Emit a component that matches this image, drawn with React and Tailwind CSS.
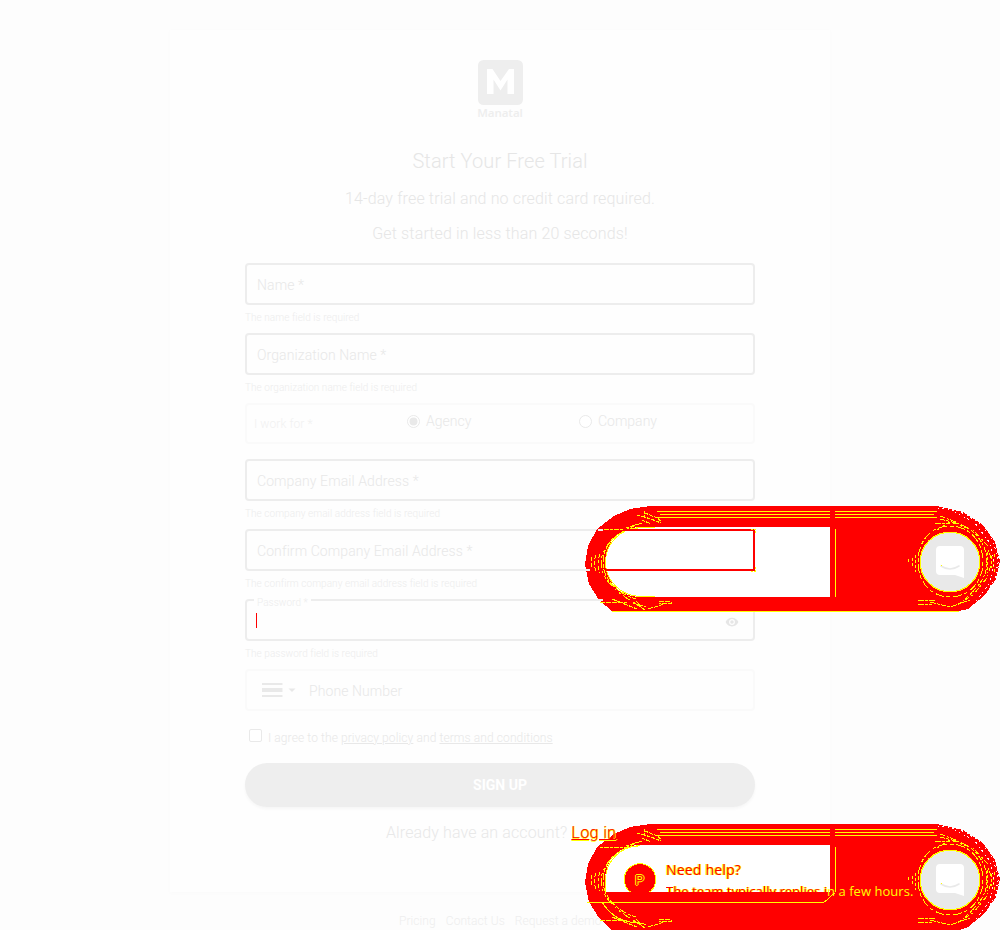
import React from "react";

function Field({ label, note }) {
  return (
    <div className="h-[70px]">
      <div className="flex h-[42px] items-center rounded-[4px] border-2 border-[#ededed] pl-[10px] pt-px text-[14px] leading-[20px] tracking-[0.09px] text-[#e8e8e8]">
        {label}
      </div>
      <div className="mt-[7px] text-[10px] leading-[12px] tracking-[0.06px] text-[#ededed]">{note}</div>
    </div>
  );
}

function Logo() {
  return (
    <div className="flex h-[60px] w-[50px] flex-col items-center">
      <svg width="45" height="45" viewBox="0 0 45 45" className="block shrink-0">
        <rect width="45" height="45" rx="5.5" fill="#eeeeee" />
        <path d="M9 34V9h5.500L22.500 21 31 9H36v25h-6.500V19.500L22.500 30.500 15.500 19.500V34Z" fill="#fff" />
      </svg>
      <div className="font-['Noto_Sans'] text-[11.5px] leading-[15px] font-semibold tracking-[-0.1px] text-[#eeeeee]">Manatal</div>
    </div>
  );
}

function Band({ lower }) {
  return (
    <svg width="415" height="106" viewBox="0 0 415 106" className="block" shapeRendering="crispEdges">
      <path
        d={
          lower
            ? "M65 0H352L378 6L398 19L410 36L415 55L411 73L400 89L383 103L374 106H27L14 94L4 78L0 58L3 40L12 23L29 10L45 3Z"
            : "M65 0H352L378 6L398 19L410 36L415 55L411 73L400 89L383 103L374 105H27L14 94L4 78L0 58L3 40L12 23L29 10L45 3Z"
        }
        fill="#f00"
      />
      {lower ? (
        <path d="M245 21V68H20V56C20 36 34 21 55 21Z" fill="#fff" />
      ) : (
        <path d="M245 21V91H54C34 90 20 75 20 56C20 37 34 21 55 21Z" fill="#fff" />
      )}
      <g fill="none" stroke="#ff0" strokeWidth="1">
        <path d="M72 5.500H245M250 5.500H352M75 8.500H245M250 8.500H349M72 11.500H245M250 11.500H352" />
        <path d={lower ? "M250.500 23V68" : "M250.500 23V91"} />
        <path d={lower ? "M55 21.500C36 22 20.500 37 20.500 56V68" : "M70 21.500H55C36 22 20.500 37 20.500 56S36 90 55 90.500H70"} />
        <path d="M53 22C35 22 18 37 18 56S34 88 51 93" strokeDasharray="4 1 7 2" />
        <path d="M49 20C31 27 16 41 16 57S31 86 48 96L60 104" strokeDasharray="3 2 8 4 2 3" />
        <path d="M15 48Q11 57 15 67M11 49Q8 57 11 66M7 51Q5 57 7 63" strokeDasharray="4 2" />
        <path d="M52 9L66 13L76 17M57 14L66 18M41 22L57 17M60 5L59 12M60 7L72 12L76 15M15 23.500H42" strokeDasharray="3 1 5 1" />
        <path d="M74 95.500H86V97.500H74M63 103L78 98.500M51 95L58 103M48 97L61 101M27 93L52 103M15 96.500H42" strokeDasharray="5 1" />
        <path d="M333 56C333 35 346 20 365 20S398 35 398 56S383 91 365 91S333 77 333 56" strokeDasharray="4 2 9 3" />
        <path d="M355 13L375 18C392 25 402 40 402 56S393 81 378 95" strokeDasharray="5 1 3 2" />
        <path d="M352 24L365 16L388 24L402 39L407 56L402 72L389 88L374 98" strokeDasharray="2 2 5 4" />
        <path d="M350 17H365M355 10L371 16M333 94.500H350M333 98.500H347M345 96L365 101L385 94" strokeDasharray="6 1 3 1" />
        <path d="M330 49V66M327 52V62M323 53V58M410 48Q407 57 410 67M406 50V62M402 46V67" strokeDasharray="3 2" />
        {!lower && <path d="M27 105.500H374" />}
        {lower && <path d="M2 78.500H238L242 76L246 72L250 69M17 78C26 93 41 100 59 99" />}
      </g>
      <path
        d="M353 2L374 5L396 18L408 34L413 53L411 70L402 87L388 100M370 6L390 17L405 37L409 55L405 77L391 95M385 7L402 20L412 38L414 56L410 76L399 91"
        fill="none" stroke="#fff" strokeWidth="1" strokeDasharray="1 3 2 4"
      />
      <circle cx="365" cy="56" r="30" fill="#e9e9e9" shapeRendering="auto" />
      <circle cx="365" cy="56" r="29.800" fill="none" stroke="#ff0" strokeWidth="1.200" />
      <g shapeRendering="auto">
        <path d="M355 40H375Q379 40 379 44V72L370 69H355Q351 69 351 65V44Q351 40 355 40Z" fill="#fff" />
        <path d="M356 60Q365 66 374 60" fill="none" stroke="#e9e9e9" strokeWidth="1.600" strokeLinecap="round" />
      </g>
      <rect x="356" y="59" width="1" height="1" fill="#ff0" />
      {!lower && (
        <g>
          <path d="M39 24H169V64H21" fill="none" stroke="#f00" strokeWidth="2" />
          <path d="M166 23H170V27M170 61V65H166" fill="none" stroke="#ff0" strokeWidth="1" strokeDasharray="2 1" />
          <path d="M13 24H18M0 64H5M14 94H18" fill="none" stroke="#eee" strokeWidth="2" />
        </g>
      )}
      {lower && (
        <g>
          <circle cx="55" cy="55.500" r="15.800" fill="#f00" stroke="#ff0" strokeWidth="1" />
          <path d="M36 68H74V77.500H36Z" fill="#f00" />
        </g>
      )}
    </svg>
  );
}

export default function App() {
  return (
    <div className="relative h-[930px] w-[1000px] overflow-hidden bg-[#fdfdfd] pt-[30px] font-['Roboto',sans-serif] font-light">
      <main className="mx-auto flex h-[862px] w-[660px] flex-col bg-[#fefefe] px-[75px] pt-[30px] shadow-[0_1px_4px_#fafafa]">
        <header className="flex flex-col items-center text-[#e6e6e6]">
          <Logo />
          <h1 className="mt-[29px] text-[20px] leading-[24px] font-light tracking-[0.1px]">Start Your Free Trial</h1>
          <p className="mt-[14px] text-[16px] leading-[24px] tracking-[0.145px]">14-day free trial and no credit card required.</p>
          <p className="mt-[11px] text-[16px] leading-[24px] tracking-[0.145px]">Get started in less than 20 seconds!</p>
        </header>
        <form className="mt-[17px]">
          <Field label="Name *" note="The name field is required" />
          <Field label="Organization Name *" note="The organization name field is required" />
          <div className="mb-[15px] flex h-[41px] rounded-[4px] border-2 border-[#fafafa] text-[14px] text-[#e8e8e8]">
            <span className="w-[160px] pl-[7px] pt-[9px] text-[12px] leading-[20px] tracking-[0.09px] text-[#f1f1f1]">I work for *</span>
            <span className="flex h-[32px] w-[172px] items-center">
              <svg width="13" height="13" viewBox="0 0 13 13" className="mr-[6px]"><circle cx="6.500" cy="6.500" r="6" fill="#fff" stroke="#e9e9e9" /><circle cx="6.500" cy="6.500" r="4" fill="#e9e9e9" /></svg>
              Agency
            </span>
            <span className="flex h-[32px] items-center">
              <svg width="13" height="13" viewBox="0 0 13 13" className="mr-[6px]"><circle cx="6.500" cy="6.500" r="6" fill="#fff" stroke="#e9e9e9" /></svg>
              Company
            </span>
          </div>
          <Field label="Company Email Address *" note="The company email address field is required" />
          <Field label="Confirm Company Email Address *" note="The confirm company email address field is required" />
          <div className="h-[70px]">
            <div className="relative flex h-[42px] items-center justify-between rounded-[4px] border-2 border-[#ededed] pl-[9px] pr-[14px] pt-[2px]">
              <span className="absolute -top-[4px] left-[7px] bg-[#fefefe] px-[3px] text-[10px] leading-[12px] tracking-[0.06px] text-[#ededed]">Password *</span>
              <span className="mb-[2px] h-[15px] w-px bg-[#f00]" />
              <svg width="14" height="14" viewBox="0 0 24 24" fill="#e6e6e6" className="mt-[2px]"><path d="M12 4.500C7 4.500 2.700 7.600 1 12c1.700 4.400 6 7.500 11 7.500s9.300-3.100 11-7.500c-1.700-4.400-6-7.500-11-7.500zM12 17a5 5 0 1 1 0-10 5 5 0 0 1 0 10zm0-8a3 3 0 1 0 0 6 3 3 0 0 0 0-6z" /></svg>
            </div>
            <div className="mt-[7px] text-[10px] leading-[12px] tracking-[0.06px] text-[#ededed]">The password field is required</div>
          </div>
          <div className="flex h-[42px] items-center rounded-[4px] border-2 border-[#fafafa] pl-[14px] text-[14px] text-[#e8e8e8]">
            <svg width="36" height="14" viewBox="0 0 36 14"><path d="M1 0h20.500v2H1zM1 5h20.500v4H1zM1 12h20.500v2H1z" fill="#e9e9e9" /><path d="M27.500 5.500h7l-3.500 3.500z" fill="#e8e8e8" /></svg>
            <span className="ml-[12px] pt-[2px] tracking-[0.09px]">Phone Number</span>
          </div>
          <div className="mt-[18px] flex h-[18px] items-start pl-[4px] text-[12px] leading-[18px] tracking-[0.1px] text-[#e8e8e8]">
            <span className="mr-[6px] h-[13px] w-[13px] rounded-[2px] border border-[#e9e9e9] bg-white" />
            <span>I agree to the <u>privacy policy</u> and <u>terms and conditions</u></span>
          </div>
          <button type="button" className="mt-[16px] block h-[44px] w-full rounded-full bg-[#eeeeee] text-[14px] font-bold text-white shadow-[0_2px_3px_#f6f6f6]">SIGN UP</button>
        </form>
        <p className="mt-[14px] pl-[141px] text-[16px] leading-[24px] tracking-[0.12px] whitespace-nowrap text-[#e8e8e8]">
          Already have an account?{" "}
          <u className="relative z-10 tracking-[0.4px] text-[#f00] [text-shadow:1px_0_0_#ff0,0_1px_0_#ff0]">Log in</u>
        </p>
      </main>
      <footer className="flex gap-[10px] pl-[399px] pt-[20px] text-[12px] leading-[18px] tracking-[0.07px] text-[#eeeeee]">
        <span>Pricing</span><span>Contact Us</span><span>Request a demo</span>
      </footer>
      <div className="absolute left-[585px] top-[506px]"><Band /></div>
      <div className="absolute left-[585px] top-[824px] font-['Open_Sans',sans-serif] font-normal">
        <Band lower />
        <span className="absolute left-[50px] top-[46px] font-['Liberation_Sans'] text-[14px] leading-[20px] text-[#f00] [text-shadow:1px_0_0_#ff0,-1px_0_0_#ff0,0_1px_0_#ff0,0_-1px_0_#ff0]">P</span>
        <span className="absolute left-[81px] top-[36px] whitespace-nowrap text-[14px] leading-[20px] tracking-[0.2px] text-[#f00] [text-shadow:1px_0_0_#ff0,-1px_0_0_#ff0]">Need help?</span>
        <div className="absolute left-[81px] top-[58px] flex whitespace-pre text-[13px] leading-[18px] tracking-[0.04px]">
          <span className="text-[#f00] [mask-image:linear-gradient(#000_10px,transparent_10px)] [text-shadow:1px_0_0_#ff0,-1px_0_0_#ff0]">The team typically replies i</span>
          <span className="text-[#ff0]">n a few hours.</span>
        </div>
      </div>
    </div>
  );
}
